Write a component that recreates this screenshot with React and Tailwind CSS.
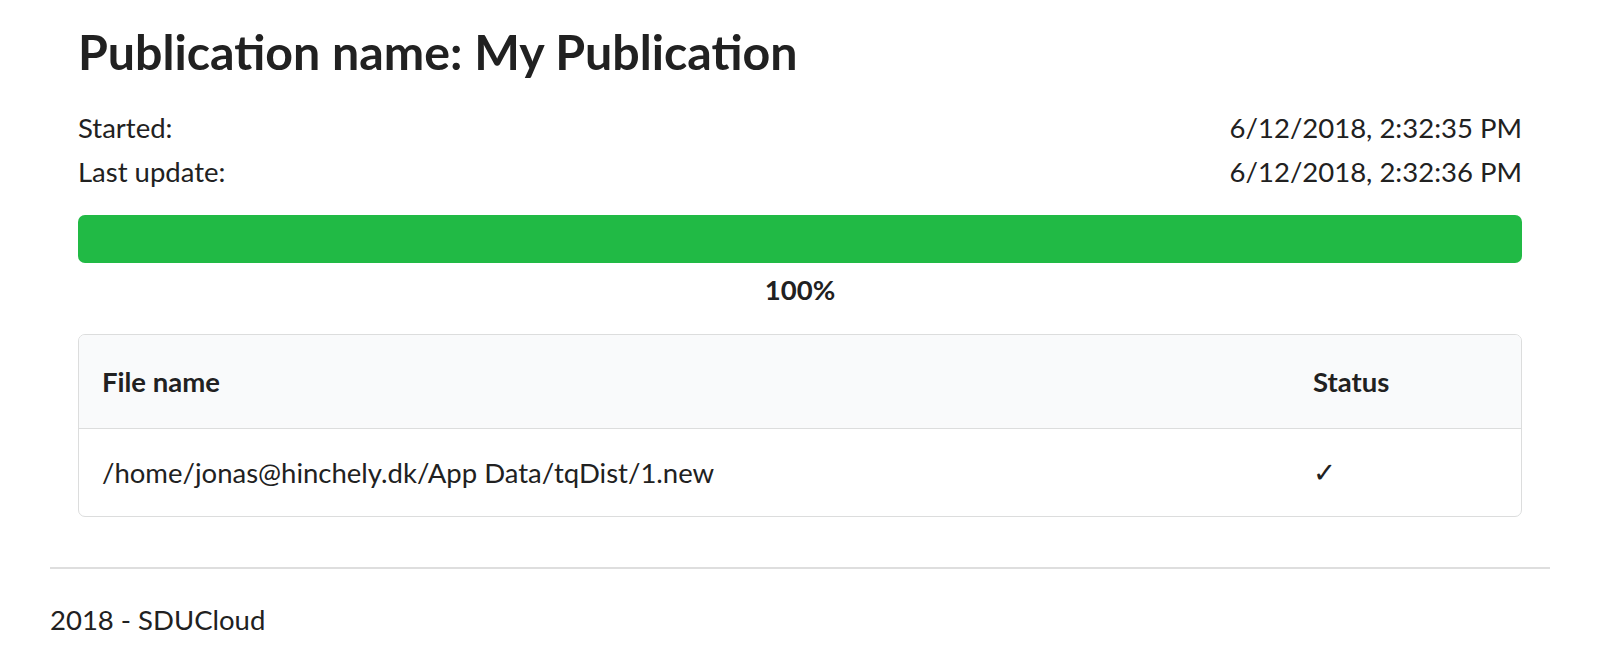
import React from 'react'

const files = [{ name: '/home/jonas@hinchely.dk/App Data/tqDist/1.new', done: true }]

function InfoRow({ label, value }) {
  return (
    <div className="flex h-11 items-center justify-between">
      <span>{label}</span>
      <span>{value}</span>
    </div>
  )
}

function ProgressBar({ percent }) {
  return (
    <div>
      <div className="h-12 w-full rounded-[7px] bg-[#f2f2f2]">
        <div className="h-full rounded-[7px] bg-[#21ba45]" style={{ width: `${percent}%` }} />
      </div>
      <p className="mt-[10px] text-center font-bold leading-[1.2]">{percent}%</p>
    </div>
  )
}

function FileTable() {
  return (
    <div className="overflow-hidden rounded-[7px] border border-[#dcdddd]">
      <table className="w-full border-collapse text-left">
        <thead>
          <tr className="bg-[#f9fafb]">
            <th className="border-b border-[#dcdddd] px-[23px] py-[30px] font-bold leading-[1.2]">File name</th>
            <th className="w-[231px] border-b border-[#dcdddd] px-[23px] py-[30px] font-bold leading-[1.2]">Status</th>
          </tr>
        </thead>
        <tbody>
          {files.map((file) => (
            <tr key={file.name}>
              <td className="px-[23px] pt-[27px] pb-[27px] leading-[1.2]">{file.name}</td>
              <td className="px-[23px] pt-[27px] pb-[27px] leading-[1.2] font-bold" style={{ fontFamily: '"DejaVu Sans", sans-serif' }}>
                {file.done ? '✓' : ''}
              </td>
            </tr>
          ))}
        </tbody>
      </table>
    </div>
  )
}

export default function App() {
  return (
    <div className="min-h-screen bg-white px-[50px] text-[27.5px] text-[#212121]" style={{ fontFamily: 'Lato, "Open Sans", sans-serif' }}>
      <div className="mx-7 pt-[23px]">
        <h1 className="text-[48.3px] font-bold leading-[1.2]">Publication name: My Publication</h1>
        <div className="mt-[25px]">
          <InfoRow label="Started:" value="6/12/2018, 2:32:35 PM" />
          <InfoRow label="Last update:" value="6/12/2018, 2:32:36 PM" />
        </div>
        <div className="mt-[21px]">
          <ProgressBar percent={100} />
        </div>
        <div className="mt-[28px]">
          <FileTable />
        </div>
      </div>
      <footer className="mt-[50px] border-t-2 border-[#dedede] pt-[34px]">
        <p className="leading-[1.2]">2018 - SDUCloud</p>
      </footer>
    </div>
  )
}
